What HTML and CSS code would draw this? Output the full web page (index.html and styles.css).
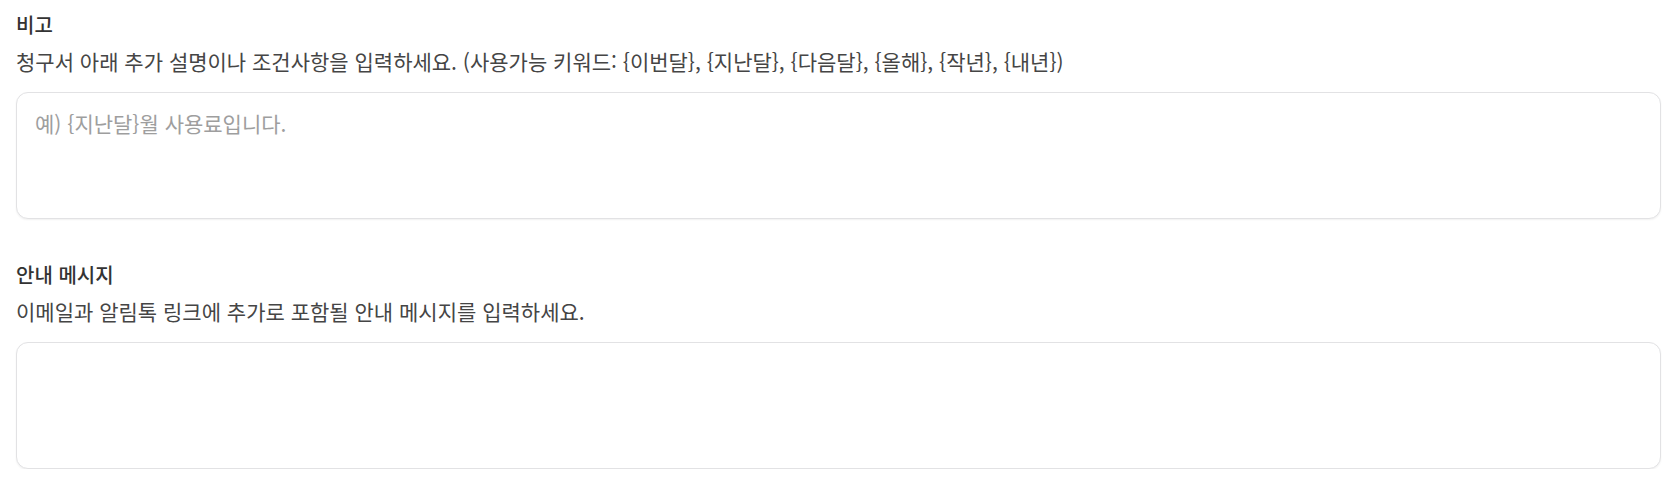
FILE: index.html
```html
<!DOCTYPE html>
<html lang="ko">
<head>
<meta charset="utf-8">
<link rel="stylesheet" href="styles.css">
</head>
<body>
<div class="page">
  <section class="field">
    <h3 class="field-title">비고</h3>
    <p class="field-desc">청구서 아래 추가 설명이나 조건사항을 입력하세요. (사용가능 키워드: {이번달}, {지난달}, {다음달}, {올해}, {작년}, {내년})</p>
    <textarea class="field-input" placeholder="예) {지난달}월 사용료입니다."></textarea>
  </section>
  <section class="field">
    <h3 class="field-title">안내 메시지</h3>
    <p class="field-desc">이메일과 알림톡 링크에 추가로 포함될 안내 메시지를 입력하세요.</p>
    <textarea class="field-input"></textarea>
  </section>
</div>
</body>
</html>
```
FILE: styles.css
```css
html, body {
  margin: 0;
  padding: 0;
  background: #ffffff;
}
body {
  font-family: "Noto Sans CJK KR", "Noto Sans", sans-serif;
  color: #3d3d3d;
}
.page {
  padding: 11px 16px 0 16px;
  display: flex;
  flex-direction: column;
  gap: 42px;
}
.field {
  display: flex;
  flex-direction: column;
}
.field-title {
  margin: 0;
  font-size: 20px;
  font-weight: 500;
  line-height: 28px;
  color: #333333;
}
.field-desc {
  margin: 7px 0 0 0;
  font-size: 21px;
  line-height: 30px;
  color: #454545;
}
.field-input {
  margin-top: 16px;
  box-sizing: border-box;
  width: 100%;
  height: 127px;
  border: 1px solid #e2e2e4;
  border-radius: 12px;
  box-shadow: 0 1px 2px rgba(0, 0, 0, 0.06);
  padding: 15px 18px;
  font-family: inherit;
  font-size: 21px;
  line-height: 30px;
  color: #333333;
  resize: none;
  outline: none;
  background: #ffffff;
}
.field-input::placeholder {
  color: #9e9e9e;
}
```
